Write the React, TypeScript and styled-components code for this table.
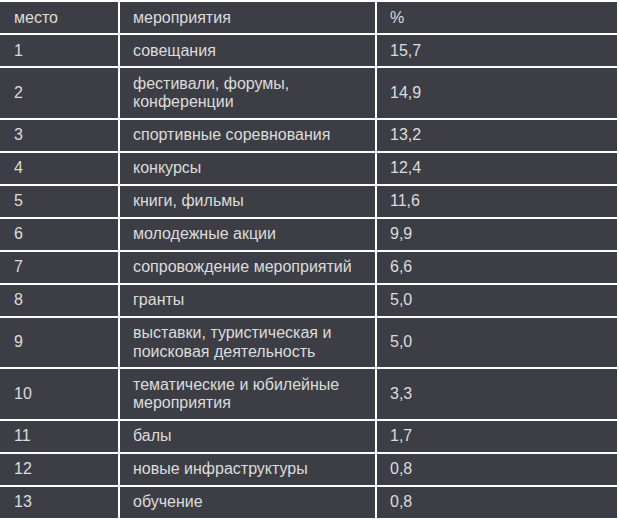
import React from "react";
import styled, { createGlobalStyle } from "styled-components";

const Global = createGlobalStyle`
  html, body { margin: 0; padding: 0; background: #ffffff; }
  body { font-family: "Liberation Sans", Arial, sans-serif; }
`;

const Page = styled.div`
  width: 619px;
  height: 519px;
  background: #ffffff;
  padding: 2px 2px 0 0;
  box-sizing: border-box;
`;

const Table = styled.div`
  display: grid;
  grid-template-columns: 118px 255px 1fr;
  column-gap: 2px;
  row-gap: 2px;
`;

const Cell = styled.div<{ $first?: boolean }>`
  background: #3d3e45;
  color: #dcdcdc;
  font-family: "Liberation Sans", Arial, sans-serif;
  font-size: 16px;
  line-height: 18.5px;
  padding: 6.5px 10px 6px ${(p) => (p.$first ? "14px" : "13px")};
  display: flex;
  align-items: center;
`;

const Lines = styled.span`
  white-space: pre-line;
`;

const rows: [string, string, string][] = [
  ["место", "мероприятия", "%"],
  ["1", "совещания", "15,7"],
  ["2", "фестивали, форумы,\nконференции", "14,9"],
  ["3", "спортивные соревнования", "13,2"],
  ["4", "конкурсы", "12,4"],
  ["5", "книги, фильмы", "11,6"],
  ["6", "молодежные акции", "9,9"],
  ["7", "сопровождение мероприятий", "6,6"],
  ["8", "гранты", "5,0"],
  ["9", "выставки, туристическая и\nпоисковая деятельность", "5,0"],
  ["10", "тематические и юбилейные\nмероприятия", "3,3"],
  ["11", "балы", "1,7"],
  ["12", "новые инфраструктуры", "0,8"],
  ["13", "обучение", "0,8"],
];

export default function App() {
  return (
    <>
      <Global />
      <Page>
        <Table>
          {rows.map((r, i) => (
            <React.Fragment key={i}>
              <Cell $first>{r[0]}</Cell>
              <Cell>
                <Lines>{r[1]}</Lines>
              </Cell>
              <Cell>{r[2]}</Cell>
            </React.Fragment>
          ))}
        </Table>
      </Page>
    </>
  );
}
